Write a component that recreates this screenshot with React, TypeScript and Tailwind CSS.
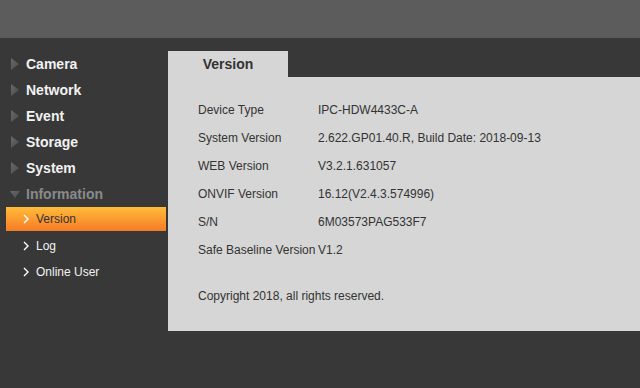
import React from "react";

const Tri = ({ down = false }: { down?: boolean }) => (
  <svg width="10" height="12" viewBox="0 0 10 12" className="shrink-0">
    <defs>
      <linearGradient id={down ? "gd" : "gr"} x1="0" y1="0" x2="1" y2="1">
        <stop offset="0" stopColor="#6a6a6a" />
        <stop offset="1" stopColor="#4a4a4a" />
      </linearGradient>
    </defs>
    {down ? (
      <polygon points="0,3 10,3 5,10" fill={`url(#gd)`} />
    ) : (
      <polygon points="1,0 9,6 1,12" fill={`url(#gr)`} />
    )}
  </svg>
);

const Chev = ({ color }: { color: string }) => (
  <svg width="8" height="10" viewBox="0 0 8 10" className="shrink-0">
    <polyline points="2,1 6,5 2,9" fill="none" stroke={color} strokeWidth="1.4" />
  </svg>
);

const rows: [string, string][] = [
  ["Device Type", "IPC-HDW4433C-A"],
  ["System Version", "2.622.GP01.40.R, Build Date: 2018-09-13"],
  ["WEB Version", "V3.2.1.631057"],
  ["ONVIF Version", "16.12(V2.4.3.574996)"],
  ["S/N", "6M03573PAG533F7"],
  ["Safe Baseline Version", "V1.2"],
];

export default function App() {
  return (
    <div
      className="w-[640px] h-[388px] bg-[#383838] overflow-hidden flex flex-col"
      style={{ fontFamily: '"Liberation Sans", Arial, sans-serif' }}
    >
      <div className="h-[38px] bg-[#5c5c5c] shrink-0" />
      <div className="flex flex-1">
        <div className="w-[168px] shrink-0 pt-[13px] pl-[6px]">
          {["Camera", "Network", "Event", "Storage", "System"].map((t) => (
            <div key={t} className="h-[26px] flex items-center pl-[4px] gap-[6px]">
              <Tri />
              <span className="text-[14px] font-bold text-[#f2f2f2]">{t}</span>
            </div>
          ))}
          <div className="h-[26px] flex items-center pl-[4px] gap-[6px]">
            <Tri down />
            <span className="text-[14px] font-bold text-[#8a8a8a]">Information</span>
          </div>
          <div className="w-[160px] h-[24px] flex items-center pl-[16px] gap-[6px] bg-gradient-to-b from-[#ffbb3a] to-[#f57b27]">
            <Chev color="#ffffff" />
            <span className="text-[12px] text-[#333]">Version</span>
          </div>
          <div className="h-[27px] mt-[1px] flex items-center pl-[16px] gap-[6px]">
            <Chev color="#ffffff" />
            <span className="text-[12px] text-[#f2f2f2]">Log</span>
          </div>
          <div className="h-[25px] flex items-center pl-[16px] gap-[6px]">
            <Chev color="#ffffff" />
            <span className="text-[12px] text-[#f2f2f2]">Online User</span>
          </div>
        </div>
        <div className="flex-1 pt-[13px]">
          <div className="w-[120px] h-[26px] bg-[#d6d6d6] flex items-center justify-center text-[14px] font-bold text-[#333]">
            Version
          </div>
          <div className="h-[254px] bg-[#d6d6d6] pl-[30px] pt-[19px] text-[12px] text-[#333]">
            {rows.map(([k, v]) => (
              <div key={k} className="h-[28px] flex items-center">
                <span className="w-[120px] shrink-0 whitespace-nowrap">{k}</span>
                <span className="whitespace-nowrap">{v}</span>
              </div>
            ))}
            <div className="mt-[22px] h-[20px] flex items-center">Copyright 2018, all rights reserved.</div>
          </div>
        </div>
      </div>
    </div>
  );
}
